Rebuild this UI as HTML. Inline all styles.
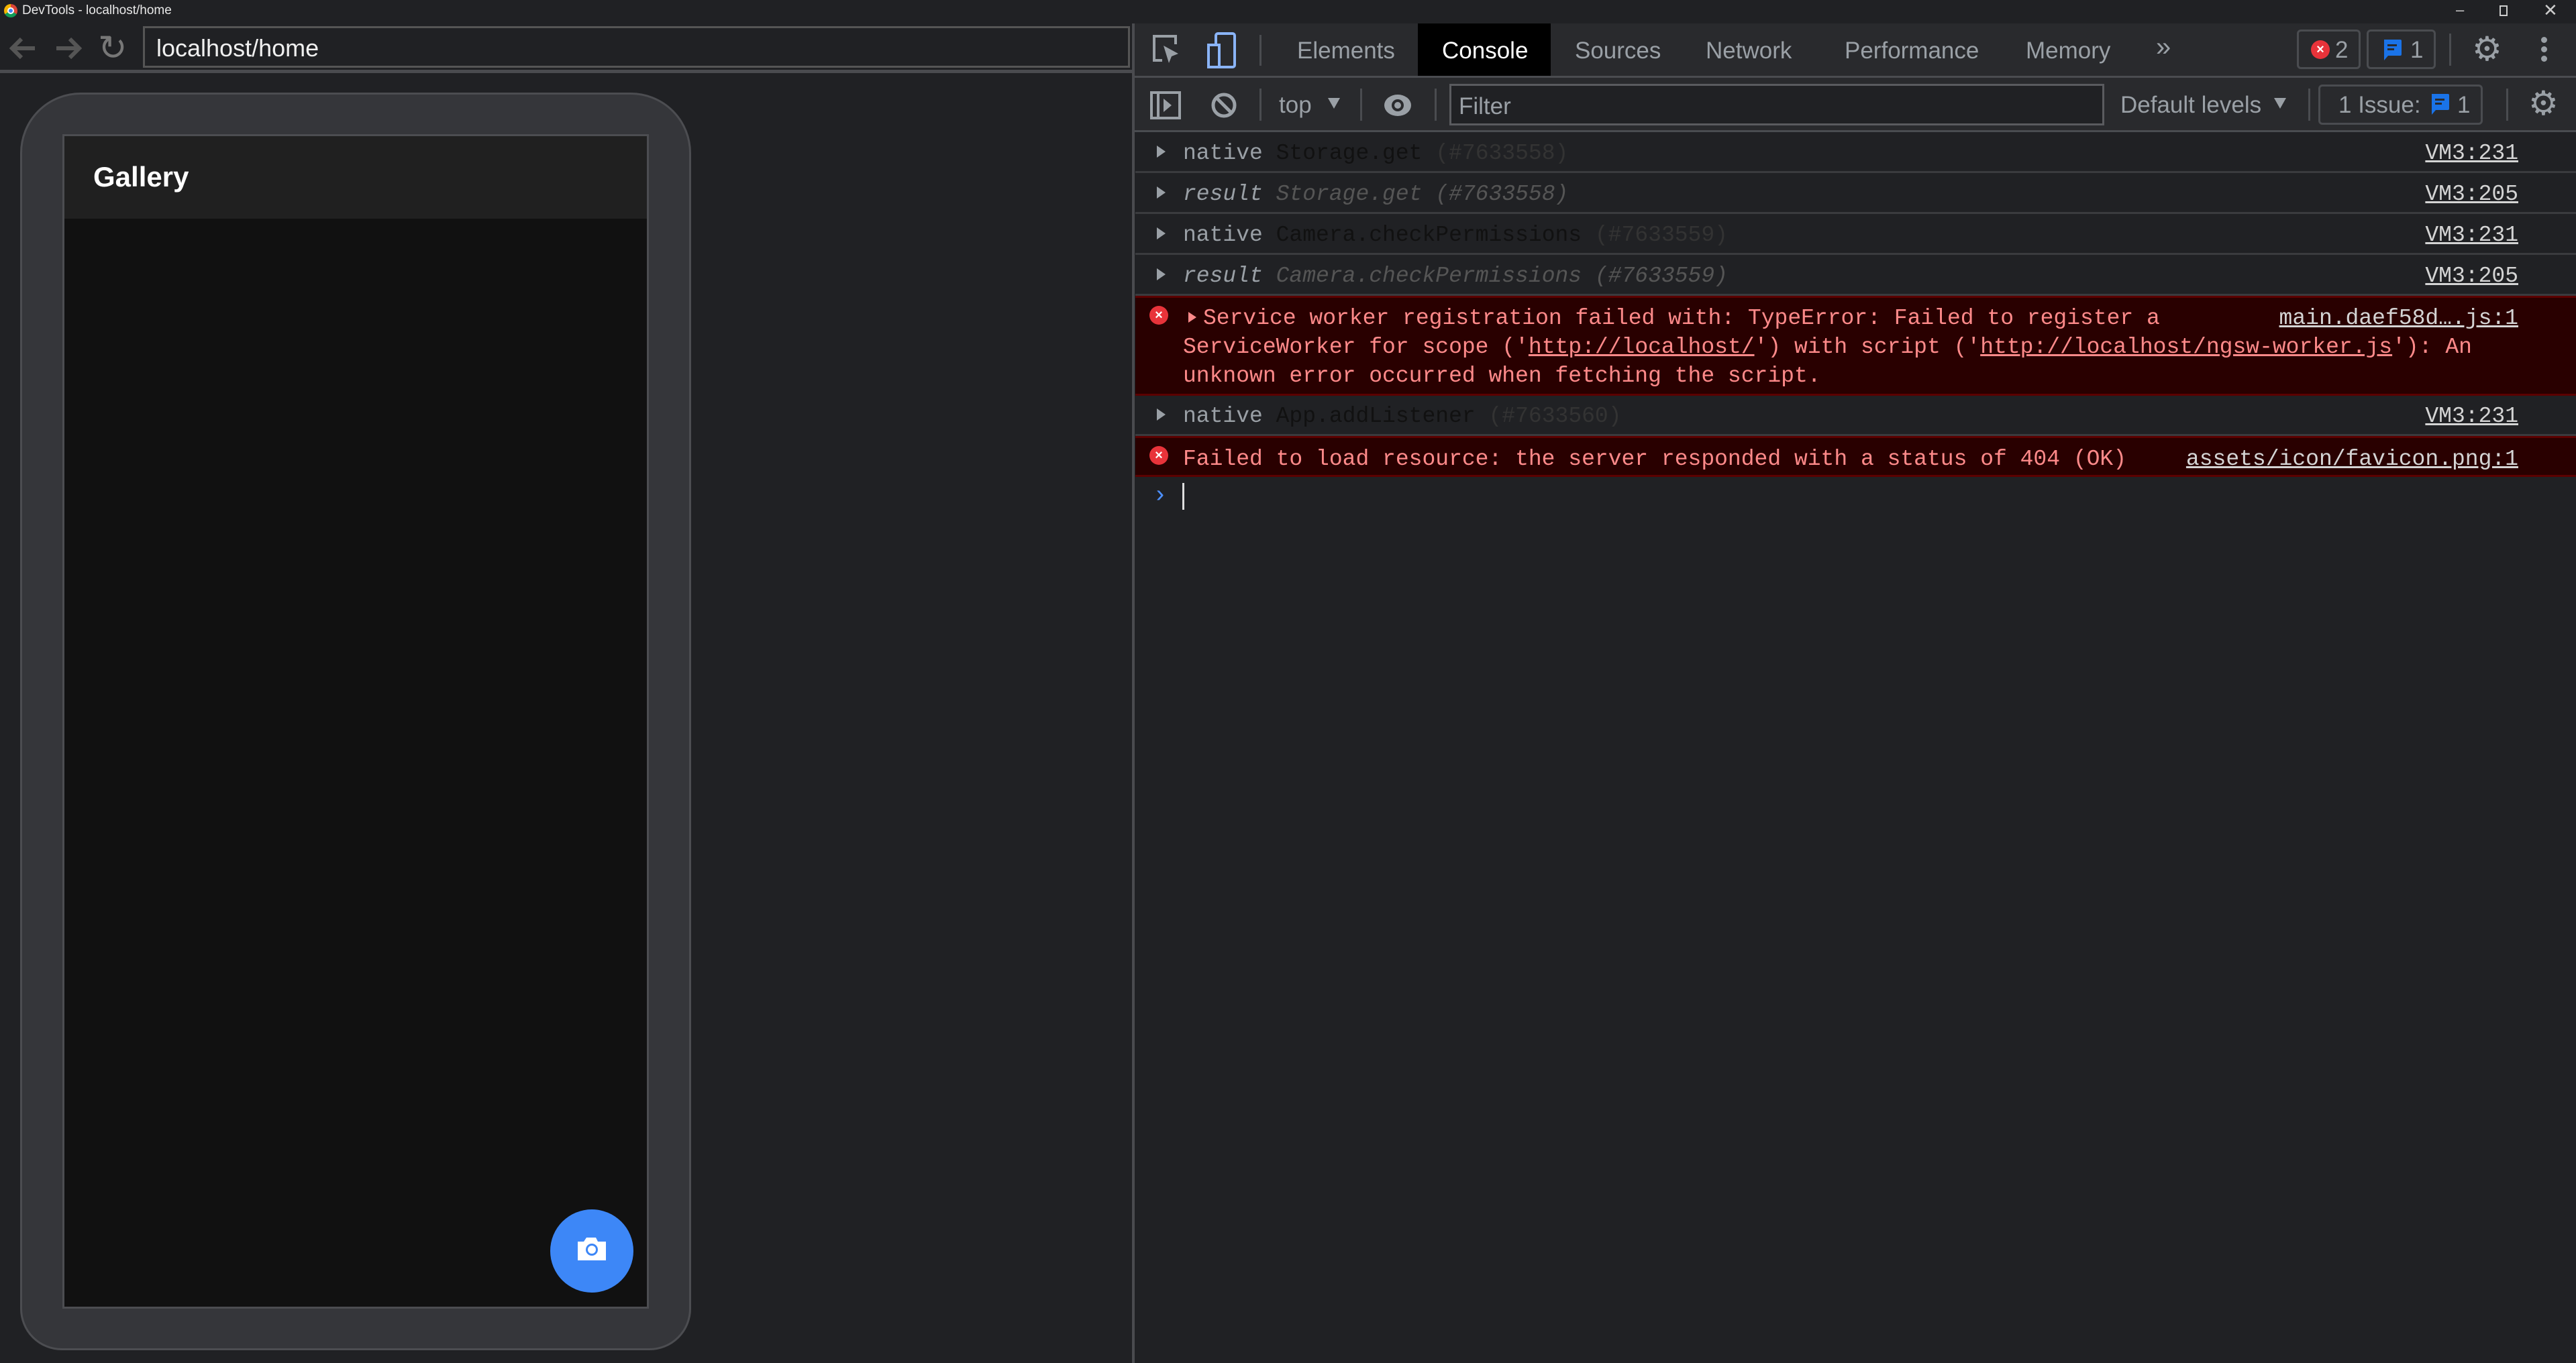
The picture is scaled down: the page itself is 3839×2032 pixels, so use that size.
<!DOCTYPE html>
<html><head><meta charset="utf-8"><style>
*{margin:0;padding:0;box-sizing:border-box}
body{width:3839px;height:2032px;background:#202124;position:relative;overflow:hidden;font-family:"Liberation Sans",sans-serif}
.a{position:absolute}
.tab{position:absolute;top:56px;font-size:35px;color:#9aa0a6}
.sep{position:absolute;width:3px;background:#4a4c50}
.row{position:absolute;left:1692px;right:0;height:61px;border-bottom:3px solid #3a3b3e;font-family:"Liberation Mono",monospace;font-size:33px;line-height:64px;color:#9aa0a6}
.row .t{position:absolute;left:71px;white-space:pre}
.row .ar{position:absolute;left:32px;top:20px;width:0;height:0;border-left:13px solid #9aa0a6;border-top:9px solid transparent;border-bottom:9px solid transparent}
.lnk{position:absolute;right:86px;text-decoration:underline;color:#d4d4d4;white-space:pre}
.err{background:#290000;border-top:3px solid #5c0000;border-bottom:3px solid #5c0000;color:#ff8a8a}
.ei{position:absolute;left:1713px;width:28px;height:28px;border-radius:50%;background:#e8333a;color:#fff;font-size:20px;line-height:28px;text-align:center;font-family:"Liberation Sans",sans-serif;font-weight:bold}
</style></head><body>
<div class="a" style="left:0;top:0;width:3839px;height:35px;background:#202124"></div>
<div class="a" style="left:6px;top:6px;width:20px;height:20px;border-radius:50%;background:conic-gradient(#db4437 0 120deg,#0f9d58 120deg 240deg,#f4b400 240deg)"></div>
<div class="a" style="left:11px;top:11px;width:10px;height:10px;border-radius:50%;background:#4285f4;border:2px solid #fff"></div>
<div class="a" style="left:33px;top:5px;font-size:19px;color:#e8e8e8">DevTools - localhost/home</div>
<div class="a" style="left:3660px;top:2px;font-size:22px;color:#ccc">–</div>
<div class="a" style="left:3725px;top:8px;width:12px;height:16px;border:2px solid #ccc"></div>
<div class="a" style="left:3790px;top:0px;font-size:26px;color:#ccc">✕</div>
<svg class="a" style="left:12px;top:52px" width="44" height="40" viewBox="0 0 44 40"><path d="M40 20H8M20 6L6 20l14 14" fill="none" stroke="#555" stroke-width="6"/></svg>
<svg class="a" style="left:80px;top:52px" width="44" height="40" viewBox="0 0 44 40"><path d="M4 20h32M24 6l14 14-14 14" fill="none" stroke="#555" stroke-width="6"/></svg>
<div class="a" style="left:146px;top:42px;font-size:52px;color:#777">↻</div>
<div class="a" style="left:213px;top:39px;width:1471px;height:62px;border:3px solid #555;background:#202124"></div>
<div class="a" style="left:233px;top:51px;font-size:36px;color:#f0f0f0">localhost/home</div>
<div class="a" style="left:0;top:104px;width:1689px;height:5px;background:#4a4b4f"></div>
<div class="a" style="left:30px;top:138px;width:1000px;height:1875px;background:#35363a;border:3px solid #4c4d51;border-radius:90px 90px 62px 62px"></div>
<div class="a" style="left:93px;top:200px;width:874px;height:1751px;background:#111;border:3px solid #4c4d51"></div>
<div class="a" style="left:96px;top:203px;width:868px;height:123px;background:#202020"></div>
<div class="a" style="left:139px;top:240px;font-size:42px;font-weight:bold;color:#fff">Gallery</div>
<div class="a" style="left:820px;top:1803px;width:124px;height:124px;border-radius:50%;background:#3d87f7"></div>
<svg class="a" style="left:858px;top:1842px" width="48" height="40" viewBox="0 0 48 40"><path d="M3 9h9l4-6h14l3 6h12v28H3z" fill="#fff"/><circle cx="24" cy="21" r="9" fill="#3d87f7"/><circle cx="24" cy="21" r="6" fill="#fff"/></svg>
<div class="a" style="left:1687px;top:35px;width:4px;height:1997px;background:#4a4b4f"></div>
<div class="a" style="left:1691px;top:35px;width:2148px;height:78px;background:#292a2d"></div>
<div class="a" style="left:1691px;top:113px;width:2148px;height:3px;background:#4a4c50"></div>
<div class="a" style="left:2113px;top:35px;width:198px;height:78px;background:#000"></div>
<svg class="a" style="left:1716px;top:50px" width="50" height="50" viewBox="0 0 50 50"><path d="M16 40H4V4h32v12" fill="none" stroke="#9aa0a6" stroke-width="4"/><path d="M18 18l8 26 4-10 10-4z" fill="#9aa0a6"/></svg>
<svg class="a" style="left:1798px;top:47px" width="46" height="56" viewBox="0 0 46 56"><rect x="14" y="3" width="28" height="50" rx="3" fill="none" stroke="#8ab4f8" stroke-width="4"/><rect x="3" y="20" width="16" height="33" fill="#292a2d" stroke="#8ab4f8" stroke-width="4"/></svg>
<div class="sep" style="left:1877px;top:52px;height:46px"></div>
<div class="tab" style="left:1933px">Elements</div>
<div class="tab" style="left:2149px;color:#fff">Console</div>
<div class="tab" style="left:2347px">Sources</div>
<div class="tab" style="left:2542px">Network</div>
<div class="tab" style="left:2749px">Performance</div>
<div class="tab" style="left:3019px">Memory</div>
<div class="tab" style="left:3213px;top:48px;font-size:40px">»</div>
<div class="a" style="left:3423px;top:44px;width:95px;height:59px;border:3px solid #4a4c50;border-radius:6px"></div>
<div class="ei" style="left:3444px;top:60px">×</div>
<div class="a" style="left:3480px;top:55px;font-size:35px;color:#9aa0a6">2</div>
<div class="a" style="left:3527px;top:44px;width:103px;height:59px;border:3px solid #4a4c50;border-radius:6px"></div>
<svg class="a" style="left:3549px;top:57px" width="32" height="34" viewBox="0 0 32 34"><path d="M4 2h24a2 2 0 0 1 2 2v20a2 2 0 0 1-2 2H10l-6 7z" fill="#1a73e8"/><rect x="9" y="9" width="14" height="3" fill="#292a2d"/><rect x="9" y="15" width="10" height="3" fill="#292a2d"/></svg>
<div class="a" style="left:3592px;top:55px;font-size:35px;color:#9aa0a6">1</div>
<div class="sep" style="left:3650px;top:50px;height:48px"></div>
<div class="a" style="left:3684px;top:44px;font-size:50px;color:#9aa0a6">⚙</div>
<div class="a" style="left:3787px;top:55px;width:9px;height:9px;border-radius:50%;background:#9aa0a6;box-shadow:0 14px 0 #9aa0a6,0 28px 0 #9aa0a6"></div>
<div class="a" style="left:1691px;top:116px;width:2148px;height:78px;background:#292a2d"></div>
<div class="a" style="left:1691px;top:194px;width:2148px;height:3px;background:#4a4c50"></div>
<svg class="a" style="left:1714px;top:136px" width="46" height="42" viewBox="0 0 46 42"><rect x="2" y="2" width="42" height="38" fill="none" stroke="#9aa0a6" stroke-width="4"/><rect x="10" y="2" width="4" height="38" fill="#9aa0a6"/><path d="M20 11l12 10-12 10z" fill="#9aa0a6"/></svg>
<svg class="a" style="left:1804px;top:137px" width="40" height="40" viewBox="0 0 40 40"><circle cx="20" cy="20" r="16" fill="none" stroke="#9aa0a6" stroke-width="5"/><path d="M9 9l22 22" stroke="#9aa0a6" stroke-width="5"/></svg>
<div class="sep" style="left:1877px;top:132px;height:48px"></div>
<div class="a" style="left:1906px;top:137px;font-size:35px;color:#9aa0a6">top</div>
<div class="a" style="left:1979px;top:146px;border-top:16px solid #9aa0a6;border-left:9px solid transparent;border-right:9px solid transparent"></div>
<div class="sep" style="left:2027px;top:132px;height:48px"></div>
<svg class="a" style="left:2060px;top:134px" width="46" height="46" viewBox="0 0 46 46"><ellipse cx="23" cy="23" rx="20" ry="16" fill="#9aa0a6"/><circle cx="23" cy="23" r="9" fill="#292a2d"/><circle cx="23" cy="23" r="5" fill="#9aa0a6"/></svg>
<div class="sep" style="left:2138px;top:132px;height:48px"></div>
<div class="a" style="left:2160px;top:125px;width:976px;height:62px;border:3px solid #5a5b5f;background:#202124"></div>
<div class="a" style="left:2174px;top:139px;font-size:35px;color:#9aa0a6">Filter</div>
<div class="a" style="left:3160px;top:137px;font-size:35px;color:#9aa0a6">Default levels</div>
<div class="a" style="left:3389px;top:146px;border-top:16px solid #9aa0a6;border-left:9px solid transparent;border-right:9px solid transparent"></div>
<div class="sep" style="left:3440px;top:132px;height:48px"></div>
<div class="a" style="left:3455px;top:126px;width:245px;height:60px;border:3px solid #4a4c50;border-radius:6px"></div>
<div class="a" style="left:3485px;top:137px;font-size:35px;color:#9aa0a6">1 Issue:</div>
<svg class="a" style="left:3620px;top:138px" width="32" height="34" viewBox="0 0 32 34"><path d="M4 2h24a2 2 0 0 1 2 2v20a2 2 0 0 1-2 2H10l-6 7z" fill="#1a73e8"/><rect x="9" y="9" width="14" height="3" fill="#292a2d"/><rect x="9" y="15" width="10" height="3" fill="#292a2d"/></svg>
<div class="a" style="left:3662px;top:137px;font-size:35px;color:#9aa0a6">1</div>
<div class="sep" style="left:3735px;top:132px;height:48px"></div>
<div class="a" style="left:3768px;top:125px;font-size:50px;color:#9aa0a6">⚙</div>
<div class="row" style="top:197px"><div class="ar"></div><span class="t">native <span style="color:#111">Storage.get</span> <span style="color:#333">(#7633558)</span></span><span class="lnk">VM3:231</span></div>
<div class="row" style="top:258px"><div class="ar"></div><span class="t" style="font-style:italic;color:#9aa0a6">result <span style="color:#555">Storage.get (#7633558)</span></span><span class="lnk">VM3:205</span></div>
<div class="row" style="top:319px"><div class="ar"></div><span class="t">native <span style="color:#111">Camera.checkPermissions</span> <span style="color:#333">(#7633559)</span></span><span class="lnk">VM3:231</span></div>
<div class="row" style="top:380px"><div class="ar"></div><span class="t" style="font-style:italic">result <span style="color:#555">Camera.checkPermissions (#7633559)</span></span><span class="lnk">VM3:205</span></div>
<div class="row err" style="top:441px;height:149px;border-bottom:3px solid #5c0000;line-height:43px;padding-top:7px">
<div style="position:absolute;left:79px;top:21px;border-left:12px solid #ff8a8a;border-top:8px solid transparent;border-bottom:8px solid transparent"></div>
<span class="t" style="left:101px;top:9px">Service worker registration failed with: TypeError: Failed to register a</span>
<span class="t" style="top:52px">ServiceWorker for scope ('<u>http://localhost/</u>') with script ('<u>http://localhost/ngsw-worker.js</u>'): An</span>
<span class="t" style="top:95px">unknown error occurred when fetching the script.</span>
<span class="lnk" style="top:9px">main.daef58d….js:1</span></div>
<div class="ei" style="top:456px">×</div>
<div class="row" style="top:589px"><div class="ar"></div><span class="t">native <span style="color:#111">App.addListener</span> <span style="color:#333">(#7633560)</span></span><span class="lnk">VM3:231</span></div>
<div class="row err" style="top:650px"><span class="t">Failed to load resource: the server responded with a status of 404 (OK)</span><span class="lnk">assets/icon/favicon.png:1</span></div>
<div class="ei" style="top:665px">×</div>
<div class="a" style="left:1718px;top:718px;font-size:36px;color:#4d90fe;font-family:'Liberation Mono',monospace">›</div>
<div class="a" style="left:1762px;top:720px;width:3px;height:40px;background:#ddd"></div>
</body></html>
